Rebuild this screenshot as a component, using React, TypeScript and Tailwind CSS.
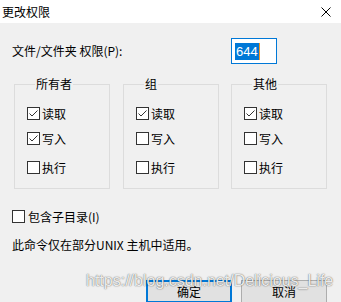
import React from "react";

function Box({ checked }: { checked?: boolean }) {
  return (
    <span className="w-[13px] h-[13px] shrink-0 border border-[#333333] bg-white flex items-center justify-center">
      {checked && (
        <svg width="11" height="11" viewBox="0 0 11 11">
          <polyline points="1.5,5.5 4,8 9.5,2.5" fill="none" stroke="#333333" strokeWidth="1" />
        </svg>
      )}
    </span>
  );
}

function Check({ label, checked }: { label: string; checked?: boolean }) {
  return (
    <div className="flex items-center h-[13px] gap-[2px]">
      <Box checked={checked} />
      <span className="leading-[16px]">{label}</span>
    </div>
  );
}

function Group({ title, read, write, exec, className }: { title: string; read: boolean; write: boolean; exec: boolean; className?: string }) {
  return (
    <fieldset className={"w-[96px] border border-[#dcdcdc] pl-[12px] pb-[14px] " + (className ?? "")}>
      <legend className="ml-[8px] px-[1px] leading-[16px]">{title}</legend>
      <div className="mt-[15px]">
        <Check label="读取" checked={read} />
      </div>
      <div className="mt-[12px]">
        <Check label="写入" checked={write} />
      </div>
      <div className="mt-[16px]">
        <Check label="执行" checked={exec} />
      </div>
    </fieldset>
  );
}

export default function App() {
  return (
    <div className="w-[341px] h-[302px] overflow-hidden bg-[#f0f0f0] text-[12px] text-black font-['Noto_Sans_CJK_SC',sans-serif] relative">
      <div className="h-[23px] bg-white flex items-center justify-between pl-[2px] pr-[10px]">
        <span className="leading-[16px]">更改权限</span>
        <svg width="10" height="10" viewBox="0 0 10 10">
          <path d="M0.5 0.5 L9.5 9.5 M9.5 0.5 L0.5 9.5" stroke="#000" strokeWidth="1" />
        </svg>
      </div>

      <div className="flex items-center mt-[15px] pl-[12px] pr-[64px]">
        <span className="flex-1 leading-[16px]">文件/文件夹 权限(P):</span>
        <div className="w-[46px] h-[26px] border border-[#0078d7] bg-white flex items-center pl-[3px]">
          <span className="bg-[#0078d7] text-white h-[17px] leading-[17px] px-px text-[13px] font-['Liberation_Sans',sans-serif]">644</span>
          <span className="w-px h-[17px] bg-[#f7931e]" />
        </div>
      </div>

      <div className="flex mt-[12px] pl-[14px]">
        <Group title="所有者" read write={true} exec={false} />
        <Group title="组" read write={false} exec={false} className="ml-[13px]" />
        <Group title="其他" read write={false} exec={false} className="ml-[12px]" />
      </div>

      <div className="mt-[21px] pl-[12px] flex items-center h-[13px] gap-[3px]">
        <Box />
        <span className="leading-[16px]">包含子目录(I)</span>
      </div>

      <div className="mt-[14px] pl-[12px] leading-[16px]">此命令仅在部分UNIX 主机中适用。</div>

      <div className="mt-[27px] flex justify-end gap-[9px] pr-[14px]">
        <div className="w-[86px] h-[23px] border-2 border-[#0078d7] bg-[#e1e1e1] flex items-center justify-center leading-[16px]">确定</div>
        <div className="w-[86px] h-[23px] border border-[#adadad] bg-[#e1e1e1] flex items-center justify-center leading-[16px]">取消</div>
      </div>

      <div className="absolute left-[86px] top-[272px] text-[16px] leading-[18px] font-['Liberation_Sans',sans-serif] text-[rgba(255,255,255,0.9)] [text-shadow:0_0_1px_rgba(0,0,0,0.6),0_0_2px_rgba(0,0,0,0.25)] whitespace-nowrap pointer-events-none">
        https://blog.csdn.net/Delicious_Life
      </div>
    </div>
  );
}
